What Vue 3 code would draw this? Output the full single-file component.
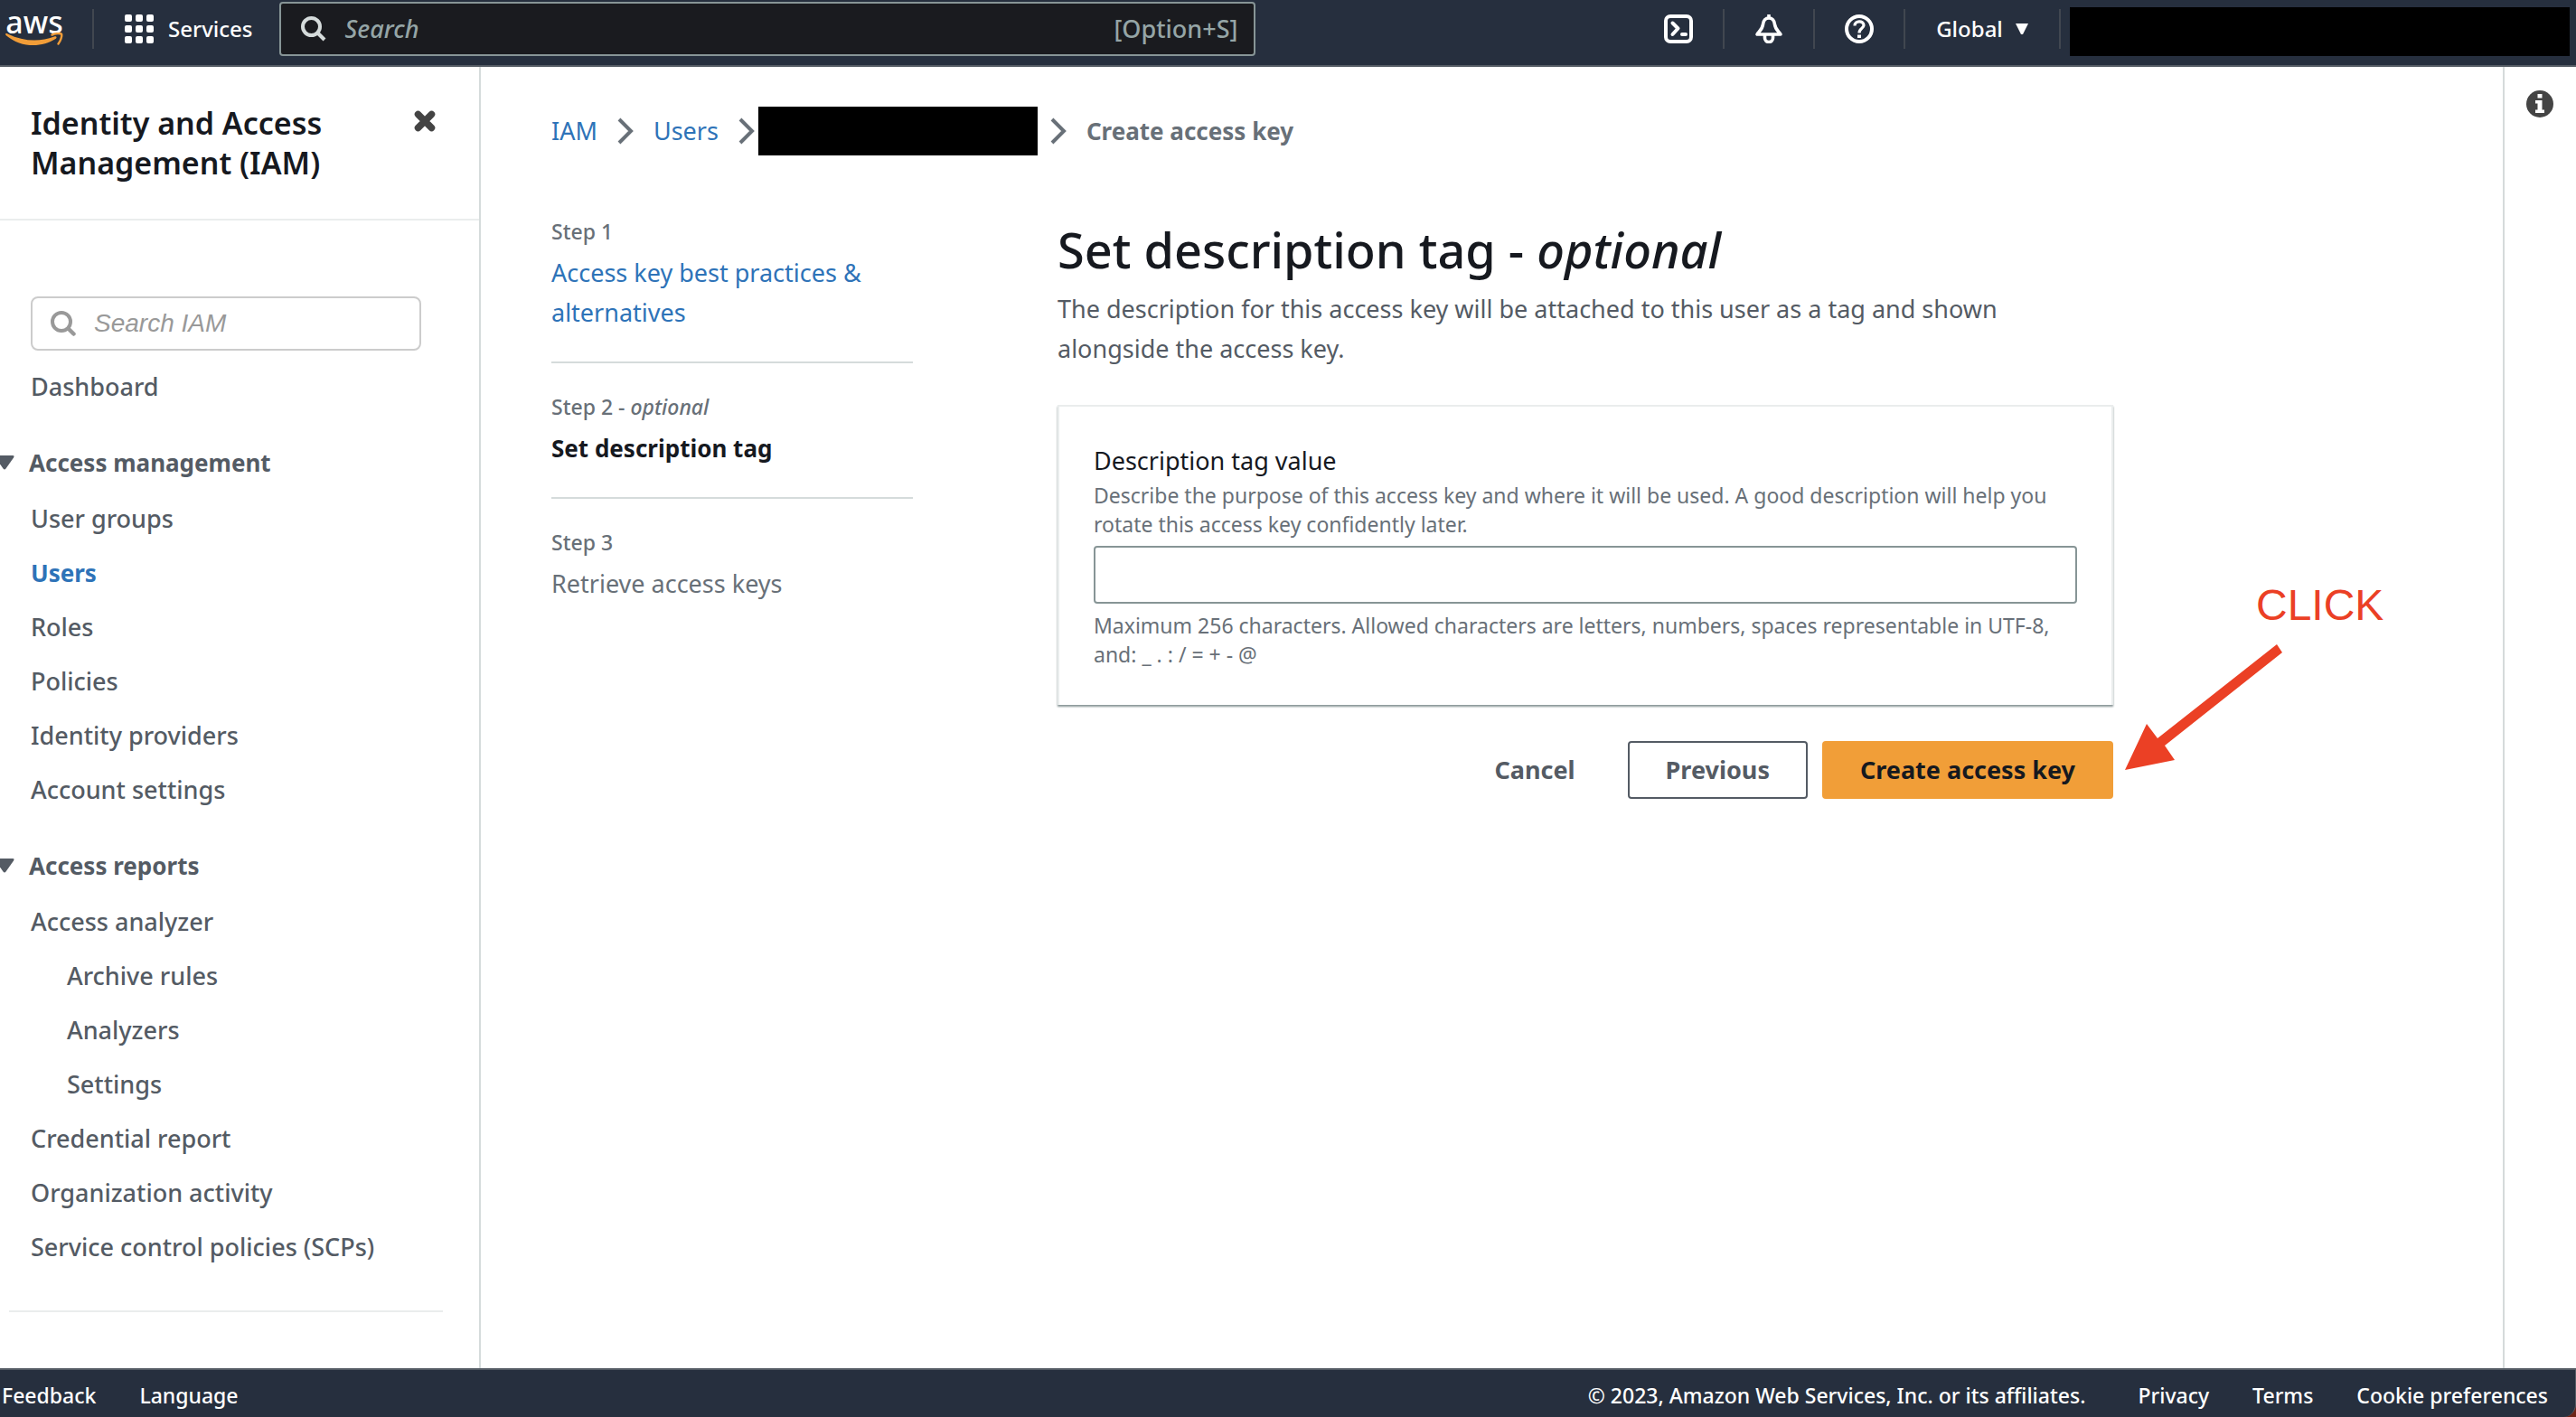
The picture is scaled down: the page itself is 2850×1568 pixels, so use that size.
<script setup>
import { ref } from 'vue'

const query = ref('')
const navQuery = ref('')
const description = ref('')

const sections = [
  {
    title: 'Access management',
    items: [
      { label: 'User groups' },
      { label: 'Users', active: true },
      { label: 'Roles' },
      { label: 'Policies' },
      { label: 'Identity providers' },
      { label: 'Account settings' },
    ],
  },
  {
    title: 'Access reports',
    items: [
      { label: 'Access analyzer' },
      { label: 'Archive rules', nested: true },
      { label: 'Analyzers', nested: true },
      { label: 'Settings', nested: true },
      { label: 'Credential report' },
      { label: 'Organization activity' },
      { label: 'Service control policies (SCPs)' },
    ],
  },
]
</script>

<template>
  <div class="page">
    <header class="topbar">
      <a class="logo" href="#" aria-label="AWS home">
        <span class="logo-text">aws</span>
        <svg class="smile" viewBox="0 0 64 16" aria-hidden="true">
          <path d="M0 2C0 .8 1 .6 2.500 1.400C20 10 38 10.500 54 4.500C56.500 3.800 57.500 5.500 55.500 7C40 17 17 17 .8 3.200Z" fill="#f19d38" />
          <path d="M51.500 2.600C54.500 .9 60.500 .7 62 1.600C63 3.500 61 9.500 58.500 12.500" fill="none" stroke="#f19d38" stroke-width="2.400" stroke-linecap="round" />
        </svg>
      </a>
      <span class="rule"></span>
      <button class="services" type="button">
        <svg width="32" height="32" viewBox="0 0 32 32" fill="#fff" aria-hidden="true">
          <rect v-for="n in 9" :key="n" :x="((n - 1) % 3) * 12" :y="Math.floor((n - 1) / 3) * 12" width="8" height="8" rx="2" />
        </svg>
        <span>Services</span>
      </button>
      <label class="search">
        <svg width="28" height="28" viewBox="0 0 28 28" fill="none" stroke="#d5dbdb" aria-hidden="true">
          <circle cx="11.500" cy="11.500" r="9.500" stroke-width="4" />
          <path d="M18 18L26 26" stroke-width="4" />
        </svg>
        <input v-model="query" type="text" placeholder="Search" aria-label="Search" />
        <span class="shortcut">[Option+S]</span>
      </label>
      <div class="tools">
        <button class="tool" type="button" aria-label="CloudShell">
          <svg width="32" height="32" viewBox="0 0 32 32" fill="none" stroke="#fff" stroke-width="4" stroke-linecap="round" aria-hidden="true">
            <rect x="2" y="2" width="28" height="28" rx="5" />
            <path d="M9.500 9.500L15.500 15.500L9.500 22" stroke-linejoin="round" />
            <path d="M20 22H24" />
          </svg>
        </button>
        <button class="tool" type="button" aria-label="Notifications">
          <svg width="32" height="32" viewBox="0 0 32 32" fill="none" stroke="#fff" stroke-width="3.600" aria-hidden="true">
            <path d="M16 0V4" />
            <path d="M16 4C12 4 10 7 9.500 11C9 16 6 18 3 22H29C26 18 23 16 22.500 11C22 7 20 4 16 4Z" stroke-linejoin="round" />
            <path d="M11.500 23V26A4.500 4.500 0 0 0 20.500 26V23" />
          </svg>
        </button>
        <button class="tool" type="button" aria-label="Help">
          <svg width="32" height="32" viewBox="0 0 32 32" fill="none" stroke="#fff" aria-hidden="true">
            <circle cx="16" cy="16" r="14" stroke-width="4" />
            <path d="M11 12.500C11 6.500 21 6.500 21 12C21 15.500 16 15 16 20.500" stroke-width="3.200" />
            <path d="M16 22.500V26" stroke-width="4" />
          </svg>
        </button>
        <button class="tool region" type="button">
          <span>Global</span>
          <svg width="14" height="12" viewBox="0 0 14 12" fill="#fff" aria-hidden="true"><path d="M0 0H14L8 12H6Z" /></svg>
        </button>
        <span class="account"></span>
      </div>
    </header>

    <div class="body">
      <aside class="sidebar">
        <div class="side-head">
          <h2>Identity and Access Management (IAM)</h2>
          <button class="close" type="button" aria-label="Close navigation">
            <svg width="24" height="24" viewBox="0 0 24 24" stroke="#444" stroke-width="7.500" stroke-linecap="round" aria-hidden="true">
              <path d="M4.500 4.500L19.500 19.500M19.500 4.500L4.500 19.500" />
            </svg>
          </button>
        </div>
        <label class="side-search">
          <svg width="28" height="28" viewBox="0 0 28 28" fill="none" stroke="#999" stroke-linecap="round" aria-hidden="true">
            <circle cx="12" cy="12" r="10" stroke-width="4" />
            <path d="M19.500 19.500L25.500 25.500" stroke-width="4.500" />
          </svg>
          <input v-model="navQuery" type="text" placeholder="Search IAM" aria-label="Search IAM" />
        </label>
        <nav>
          <ul class="links">
            <li><a href="#">Dashboard</a></li>
          </ul>
          <section v-for="s in sections" :key="s.title" class="group">
            <button class="group-title" type="button">
              <svg width="22" height="16" viewBox="0 0 22 16" fill="#545b64" aria-hidden="true">
                <path d="M2 0H20Q22.500 .3 21 2.500L12.500 14.500Q11 16.500 9.500 14.500L1 2.500Q-.5 .3 2 0Z" />
              </svg>
              <span>{{ s.title }}</span>
            </button>
            <ul class="links">
              <li v-for="i in s.items" :key="i.label" :class="{ nested: i.nested }">
                <a href="#" :class="{ active: i.active }">{{ i.label }}</a>
              </li>
            </ul>
          </section>
        </nav>
        <hr />
      </aside>

      <main class="content">
        <nav class="crumbs" aria-label="Breadcrumb">
          <a href="#">IAM</a>
          <svg class="chev" viewBox="0 0 18 30"><path d="M2 2L15 15L2 28" /></svg>
          <a href="#">Users</a>
          <svg class="chev" viewBox="0 0 18 30"><path d="M2 2L15 15L2 28" /></svg>
          <span class="redacted"></span>
          <svg class="chev" viewBox="0 0 18 30"><path d="M2 2L15 15L2 28" /></svg>
          <b>Create access key</b>
        </nav>

        <div class="wizard">
          <ol class="steps">
            <li>
              <small>Step 1</small>
              <a href="#">Access key best practices &amp; alternatives</a>
            </li>
            <li>
              <small>Step 2 - <i>optional</i></small>
              <b>Set description tag</b>
            </li>
            <li>
              <small>Step 3</small>
              <span>Retrieve access keys</span>
            </li>
          </ol>

          <form class="form" @submit.prevent>
            <h1>Set description tag - <i>optional</i></h1>
            <p class="lead">The description for this access key will be attached to this user as a tag and shown alongside the access key.</p>
            <div class="card">
              <label for="tag">Description tag value</label>
              <p>Describe the purpose of this access key and where it will be used. A good description will help you rotate this access key confidently later.</p>
              <input id="tag" v-model="description" type="text" maxlength="256" />
              <p>Maximum 256 characters. Allowed characters are letters, numbers, spaces representable in UTF-8, and: _ . : / = + - @</p>
            </div>
            <div class="actions">
              <button class="btn plain" type="button">Cancel</button>
              <button class="btn" type="button">Previous</button>
              <button class="btn primary" type="submit">Create access key</button>
            </div>
            <div class="callout">
              <span>CLICK</span>
              <svg width="176" height="140" viewBox="0 0 176 140" fill="#eb4025" aria-hidden="true">
                <path d="M169 1L175 10L45 113L56 129L1 140L25 89L37 105Z" />
              </svg>
            </div>
          </form>
        </div>
      </main>

      <aside class="info">
        <button type="button" aria-label="Info">
          <svg width="30" height="30" viewBox="0 0 30 30" aria-hidden="true">
            <circle cx="15" cy="15" r="15" fill="#444" />
            <path d="M12.500 4H17.500V8.500H12.500ZM10 11H17.500V21.500H20V25H10V21.500H12.500V14.500H10Z" fill="#fff" />
          </svg>
        </button>
      </aside>
    </div>

    <div class="footer-edge">
      <footer class="footer">
        <a href="#">Feedback</a>
        <a href="#">Language</a>
        <span class="copy">© 2023, Amazon Web Services, Inc. or its affiliates.</span>
        <a href="#">Privacy</a>
        <a href="#">Terms</a>
        <a href="#">Cookie preferences</a>
      </footer>
    </div>
  </div>
</template>

<style>
body {
  margin: 0;
  background: #fff;
}
</style>

<style scoped>
.page {
  min-height: 100vh;
  display: flex;
  flex-direction: column;
  font-family: "Noto Sans", "Open Sans", sans-serif;
  font-size: 27px;
  line-height: 44px;
  color: #545b64;
  overflow-x: hidden;
}
*,
*::before,
*::after {
  box-sizing: border-box;
}
button,
input {
  font: inherit;
  color: inherit;
  background: none;
  border: 0;
  padding: 0;
  margin: 0;
}
button {
  cursor: pointer;
}
a {
  color: inherit;
  text-decoration: none;
}
svg {
  display: block;
  flex: none;
}
ul,
ol {
  list-style: none;
  margin: 0;
  padding: 0;
}

/* top bar */
.topbar {
  display: flex;
  align-items: flex-start;
  height: 74px;
  background: #262f3e;
  border-bottom: 2px solid #545b64;
  color: #fff;
  font-size: 24px;
  font-weight: 500;
}
.logo {
  width: 64px;
  margin: 4px 32px 0 6px;
  text-align: center;
}
.logo-text {
  display: block;
  height: 32px;
  font-size: 34px;
  line-height: 40px;
}
.smile {
  width: 64px;
  height: 16px;
}
.rule {
  width: 2px;
  height: 44px;
  margin-top: 10px;
  background: #414750;
}
.services {
  display: flex;
  align-items: center;
  gap: 16px;
  height: 64px;
  margin: 0 30px 0 34px;
}
.search {
  flex: 0 1 1080px;
  display: flex;
  align-items: center;
  height: 60px;
  margin-top: 2px;
  padding: 0 18px 0 22px;
  border: 2px solid #879596;
  border-radius: 4px;
  background: #1a1b1f;
  color: #95a5a6;
  font-size: 27px;
}
.search input {
  flex: 1;
  min-width: 0;
  margin-left: 20px;
  outline: none;
}
.search input::placeholder {
  color: #95a5a6;
  font-style: italic;
  opacity: 1;
}
.tools {
  display: flex;
  margin-left: auto;
}
.tool {
  display: flex;
  align-items: center;
  justify-content: center;
  width: 100px;
  height: 44px;
  margin-top: 10px;
  border-right: 2px solid #414750;
}
.region {
  width: 172px;
  gap: 14px;
}
.account {
  width: 553px;
  height: 54px;
  margin: 8px 7px 0 10px;
  background: #000;
}

/* columns */
.body {
  flex: 1;
  display: flex;
}
.sidebar {
  flex: none;
  width: 532px;
  border-right: 2px solid #d5dbdb;
  font-weight: 500;
}
.side-head {
  display: flex;
  align-items: flex-start;
  justify-content: space-between;
  padding: 40px 48px 40px 34px;
  border-bottom: 2px solid #eaeded;
}
.side-head h2 {
  width: 360px;
  margin: 0;
  font-size: 34px;
  line-height: 44px;
  font-weight: 600;
  color: #16191f;
}
.close {
  margin-top: 8px;
}
.side-search {
  display: flex;
  align-items: center;
  height: 60px;
  margin: 84px 64px 10px 34px;
  padding: 0 20px;
  border: 2px solid #ccc;
  border-radius: 8px;
}
.side-search input {
  flex: 1;
  min-width: 0;
  margin-left: 20px;
  font-family: "Liberation Sans", Arial, sans-serif;
  font-size: 28px;
  font-weight: 400;
  outline: none;
}
.side-search input::placeholder {
  color: #999;
  font-style: italic;
  opacity: 1;
}
.links li {
  padding-left: 34px;
  line-height: 60px;
}
.links .nested {
  padding-left: 74px;
}
.active {
  font-size: 26px;
  font-weight: 700;
  color: #2e73b8;
}
.group {
  margin-top: 24px;
}
.group-title {
  display: flex;
  align-items: center;
  gap: 16px;
  height: 60px;
  margin: 0 0 2px -6px;
  font-size: 26px;
  font-weight: 700;
}
.sidebar hr {
  height: 2px;
  margin: 40px 40px 0 10px;
  border: 0;
  background: #eaeded;
}

/* content */
.content {
  flex: 1;
  min-width: 0;
  padding: 44px 78px 80px;
}
.crumbs {
  display: flex;
  align-items: center;
  height: 54px;
  margin-bottom: 68px;
  color: #687078;
}
.crumbs a,
.steps a {
  color: #2e73b8;
}
.crumbs b,
.steps b {
  font-size: 26px;
  font-weight: 700;
}
.chev {
  width: 18px;
  height: 30px;
  margin: 0 22px;
  fill: none;
  stroke: #687078;
  stroke-width: 4px;
}
.redacted {
  width: 309px;
  height: 54px;
  margin: 0 -8px 0 -18px;
  background: #000;
}
.wizard {
  display: flex;
  gap: 160px;
  color: #687078;
}
.steps {
  flex: 0 0 400px;
}
.steps li {
  padding-bottom: 32px;
  margin-bottom: 32px;
  border-bottom: 2px solid #d5dbdb;
}
.steps li:last-child {
  border-bottom: 0;
}
.steps small {
  display: block;
  margin-bottom: 8px;
  font-size: 23px;
  font-weight: 500;
  line-height: 32px;
}
.steps b {
  color: #16191f;
}
.form {
  position: relative;
  flex: 0 1 1168px;
}
.form h1 {
  margin: 0 0 8px;
  font-size: 54px;
  line-height: 72px;
  font-weight: 500;
  color: #16191f;
}
.lead {
  margin: 0 0 40px;
  padding-right: 80px;
  color: #545b64;
}
.card {
  padding: 38px 38px 40px;
  border: 2px solid #eaeded;
  border-width: 2px 2px 0;
  box-shadow: 0 2px 2px #879596;
}
.card label {
  display: block;
  color: #16191f;
}
.card p {
  margin: 0;
  font-size: 23px;
  line-height: 32px;
}
.card input {
  display: block;
  width: 100%;
  height: 64px;
  margin: 8px 0;
  padding: 0 20px;
  border: 2px solid #879596;
  border-radius: 4px;
}
.actions {
  display: flex;
  justify-content: flex-end;
  gap: 16px;
  margin-top: 40px;
}
.btn {
  height: 64px;
  padding: 0 40px;
  border: 2px solid #545b64;
  border-radius: 4px;
  font-weight: 700;
  color: #545b64;
}
.plain {
  border-color: transparent;
}
.primary {
  border-color: #f19e38;
  background: #f19e38;
  color: #16191f;
}

/* note laid over the page beside the submit button */
.callout {
  position: absolute;
  left: calc(100% + 12px);
  bottom: 32px;
  color: #eb4025;
  font-family: "Liberation Sans", Arial, sans-serif;
  font-size: 48px;
  line-height: 56px;
}
.callout span {
  display: block;
  margin: 0 0 14px 146px;
}

.info {
  flex: none;
  width: 81px;
  padding: 24px 0 0 24px;
  border-left: 2px solid #d5dbdb;
}

.footer-edge {
  background: #6e2216;
}
.footer {
  display: flex;
  align-items: center;
  gap: 48px;
  height: 54px;
  padding: 4px 30px 0 2px;
  border-top: 2px solid #545b64;
  border-right: 1px solid #545b64;
  border-bottom-right-radius: 14px;
  background: #262f3e;
  color: #fff;
  font-size: 23px;
  font-weight: 500;
}
.copy {
  margin: 0 10px 0 auto;
}
</style>
